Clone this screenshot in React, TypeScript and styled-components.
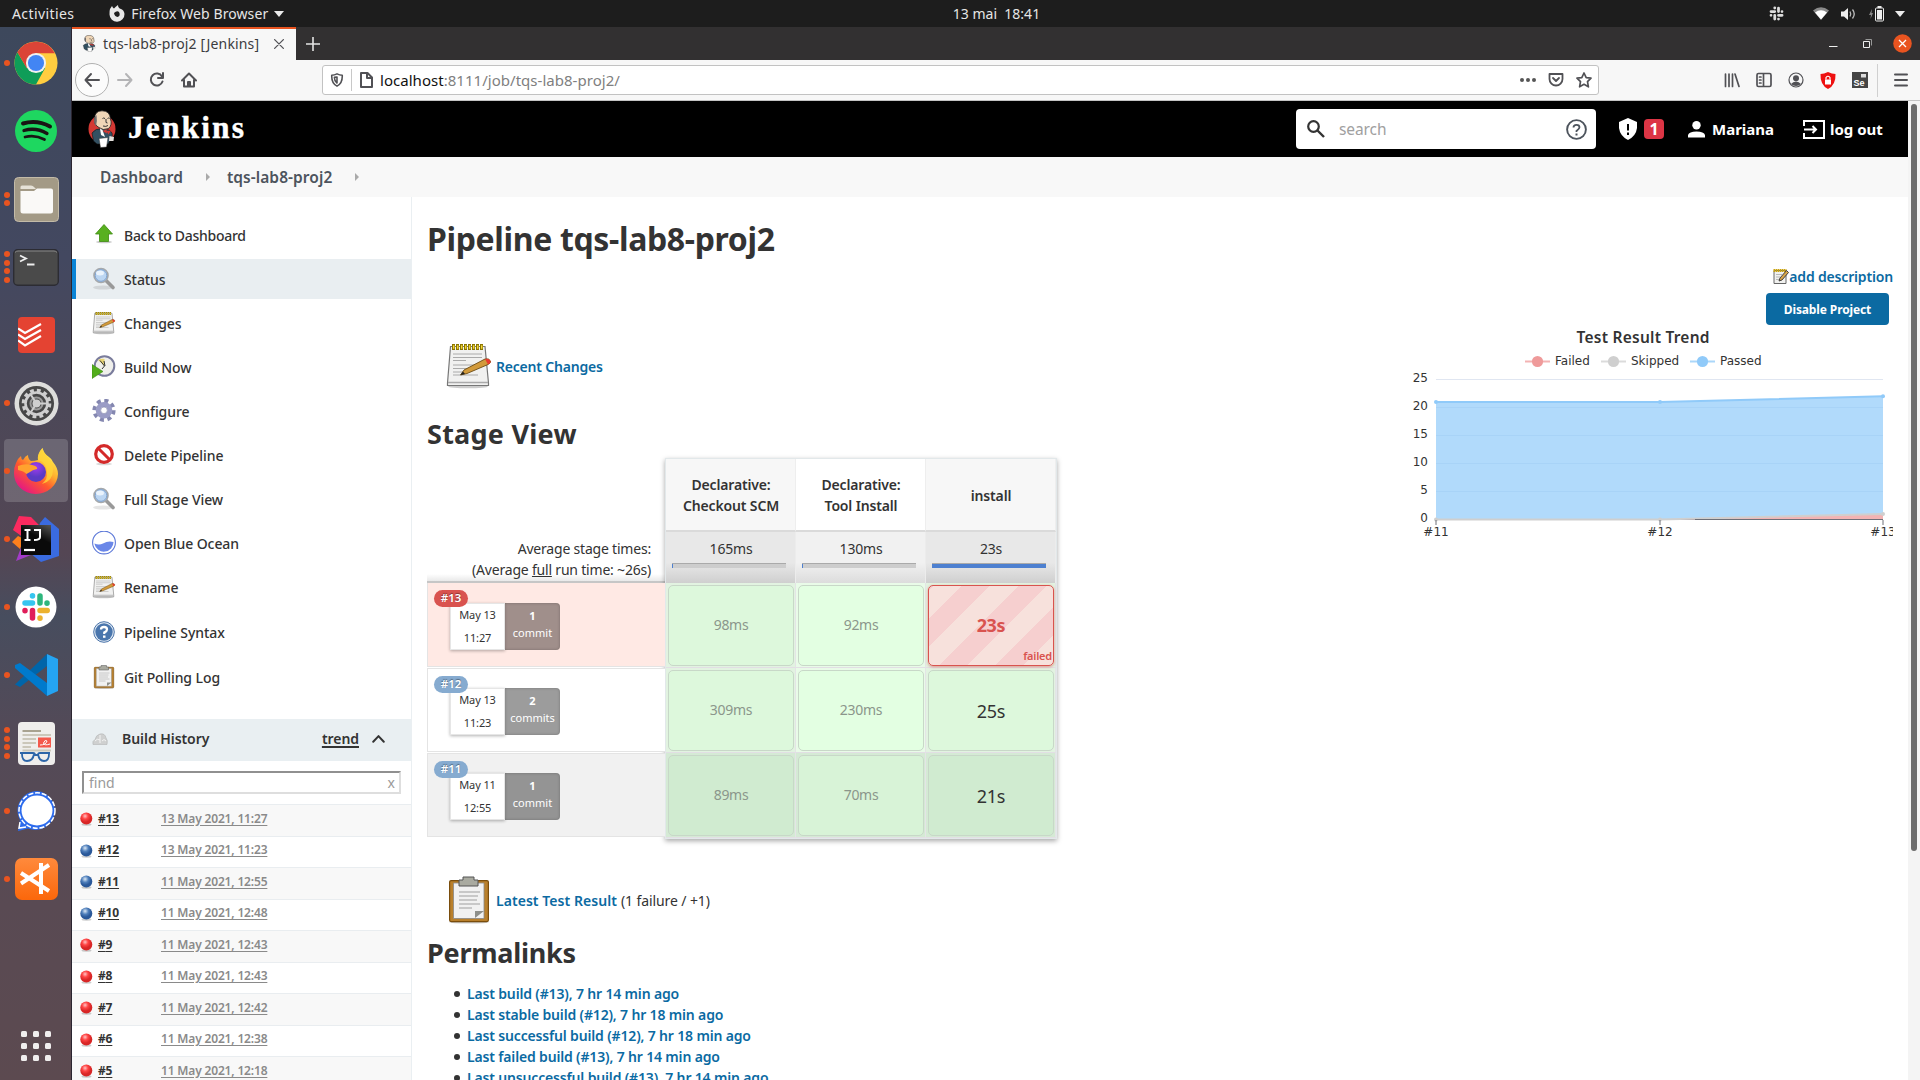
import React from 'react';
import styled, { createGlobalStyle, css } from 'styled-components';

const UI = `"Noto Sans", "Open Sans", sans-serif`;

const Global = createGlobalStyle`
  * { box-sizing: border-box; }
  html, body { margin: 0; padding: 0; overflow: hidden; }
  body { font-family: ${UI}; color: #333; background: #fff; }
  svg { display: block; flex: none; }
`;

/* ---------- shell ---------- */
const Screen = styled.div`
  width: 1920px; height: 1080px; overflow: hidden;
  display: flex; flex-direction: column;
`;
const TopBar = styled.div`
  height: 27px; flex: none; background: #1d1d1d; color: #e6e6e6;
  display: grid; grid-template-columns: 1fr auto 1fr; align-items: center;
  font-size: 14px; letter-spacing: 0.08px; white-space: pre;
`;
const TopLeft = styled.div`display: flex; align-items: center; padding-left: 12px;`;
const Activities = styled.span`letter-spacing: 0.4px;`;
const AppMenu = styled.div`display: flex; align-items: center; gap: 6px; margin-left: 35px;`;
const Clock = styled.div`position: relative; left: 36.5px; letter-spacing: 0;`;
const TopRight = styled.div`
  display: flex; align-items: center; justify-content: flex-end; padding-right: 15px;
`;
const WifiIcon = styled.svg`margin-left: 29px;`;
const TrayIcon = styled.svg`margin-left: 12px;`;
const Body = styled.div`flex: 1; display: flex; min-height: 0;`;
const Dock = styled.div`
  width: 72px; flex: none; display: flex; flex-direction: column; padding-top: 2px;
  background: linear-gradient(#3d485c 0%, #434860 22%, #4c4858 36%, #544654 50%, #474d5e 56%, #524a58 66%, #584a54 78%, #5c4a50 100%);
  border-right: 1px solid #2b2530;
`;
const DockItem = styled.div<{ $active?: boolean }>`
  height: 68px; flex: none; display: flex; align-items: center; position: relative;
  justify-content: center; padding-left: 1px;
  &::before {
    content: ''; display: ${p => (p.$active ? 'block' : 'none')};
    position: absolute; left: 4px; top: 2px; width: 64px; height: 63px;
    border-radius: 4px; background: rgba(255,255,255,.17);
  }
  svg { position: relative; }
`;
const Dots = styled.div`
  position: absolute; left: 4px; top: 0; height: 68px; width: 6px;
  display: flex; flex-direction: column; justify-content: center; gap: 2.6px;
  i { width: 6px; height: 6px; border-radius: 3px; background: #e95420; }
`;
const AppGrid = styled.div`
  margin: auto 0 19px 21px; display: grid; grid-template-columns: repeat(3, 6px); gap: 6px;
  i { width: 6px; height: 6px; border-radius: 1.5px; background: #f0eeee; }
`;

/* ---------- browser ---------- */
const Browser = styled.div`flex: 1; display: flex; flex-direction: column; min-width: 0;`;
const TabStrip = styled.div`
  height: 33px; flex: none; background: #323031; display: flex; align-items: center; gap: 10px;
`;
const Tab = styled.div`
  width: 224px; height: 33px; background: #f7f7f7; border-top: 2px solid #e95420;
  display: flex; align-items: center; padding: 0 12px 2px 9px;
  font-size: 14px; letter-spacing: 0.15px; color: #3c3c40; white-space: nowrap;
`;
const TabTitle = styled.span`flex: 1; margin-left: 6px;`;
const WinButtons = styled.div`
  margin-left: auto; display: flex; align-items: center; gap: 21px; padding-right: 8px;
  svg:first-child { margin-right: 4px; }
`;
const NavBar = styled.div`
  height: 41px; flex: none; background: #f7f7f7; border-bottom: 1px solid #c4c4c4;
  display: flex; align-items: center; padding-left: 3px;
`;
const BackButton = styled.div`
  width: 34px; height: 34px; border-radius: 17px; border: 1px solid #b1b1b1; background: #fcfcfc;
  display: flex; align-items: center; justify-content: center; margin-right: 8px;
`;
const NavIcons = styled.div`display: flex; gap: 16px; width: 205px;`;
const UrlBar = styled.div`
  width: 1277px; height: 30px; border: 1px solid #c2c2c2; border-radius: 3px; background: #fff;
  display: flex; align-items: center; padding: 0 6px 0 7px;
  font-size: 15px; letter-spacing: 0.03px; color: #7f7f7f;
  b { font-weight: 400; color: #111; }
`;
const UrlSep = styled.div`width: 1px; height: 22px; background: #c8c8c8; margin: 0 6px 0 7px;`;
const UrlText = styled.span`flex: 1; margin-left: 6px;`;
const UrlActions = styled.div`display: flex; gap: 12px; align-items: center;`;
const ToolIcons = styled.div`
  margin-left: auto; display: flex; align-items: center; gap: 16px; padding-right: 11px;
`;
const ToolSep = styled.div`width: 1px; height: 33px; background: #d0d0d0; margin: 0 -1px 0 -6.5px;`;

const Viewport = styled.div`flex: 1; display: flex; min-height: 0;`;
const Page = styled.div`flex: 1; min-width: 0; display: flex; flex-direction: column; background: #fff;`;
const Scroll = styled.div`
  width: 12px; background: #f4f4f4; padding: 3px 3px 0 3px;
  &::before { content: ''; display: block; height: 747px; border-radius: 3px; background: #6c6c6c; }
`;

/* ---------- Jenkins header ---------- */
const Header = styled.div`
  height: 56px; flex: none; background: #000; color: #fff; display: flex; align-items: center;
  padding: 0 24px 0 15px; font-size: 15px; font-weight: 700;
`;
const Brand = styled.span`
  font-family: "Liberation Serif", serif; font-weight: 700; font-size: 31.5px;
  -webkit-text-stroke: 0.4px #fff;
  margin-left: 11px; letter-spacing: 2.1px; position: relative; top: -1px;
`;
const SearchBox = styled.div`
  margin-left: auto; width: 300px; height: 40px; border-radius: 4px; background: #fff; color: #a0a0a0;
  display: flex; align-items: center; padding: 0 9px 0 11px; font-weight: 400; font-size: 15.5px;
`;
const SearchHint = styled.span`flex: 1; margin-left: 14px; letter-spacing: -0.1px;`;
const Alert = styled.div`
  display: flex; align-items: center; gap: 6px; margin-left: 22px;
  span { width: 20px; height: 20px; border-radius: 4px; background: #dc3545; text-align: center; line-height: 20px; font-size: 16px; }
`;
const HeadLink = styled.div<{ $w: number; $gap: number }>`
  display: flex; align-items: center; justify-content: flex-start; width: ${p => p.$w}px; gap: ${p => p.$gap}px;
  letter-spacing: 0; white-space: nowrap;
`;
const Crumbs = styled.div`
  height: 40px; flex: none; background: #f8f8f8; display: flex; align-items: center;
  padding: 0 0 1px 28px; font-size: 15.5px; letter-spacing: 0.06px; font-weight: 600; color: #4d545d;
`;
const CrumbArrow = styled.i`
  border: 4px solid transparent; border-left: 4px solid #aaa; border-right: 0; margin: 1px 17px 0 23px;
`;
const Columns = styled.div`flex: 1; display: flex; min-height: 0;`;

/* ---------- sidebar ---------- */
const Side = styled.div`
  width: 340px; flex: none; border-right: 1px solid #eaeff2; display: flex; flex-direction: column;
  overflow: hidden; padding-top: 18px;
`;
const Task = styled.div<{ $on?: boolean; $extra?: number; $tight?: boolean }>`
  height: 40px; flex: none; margin-bottom: ${p => 4 + (p.$extra || 0)}px;
  display: flex; align-items: center; gap: 8px; padding-left: 16px;
  border-left: 4px solid ${p => (p.$on ? '#0b84d6' : 'transparent')};
  background: ${p => (p.$on ? '#e9eef1' : 'transparent')};
  font-size: 14px; font-weight: 500; letter-spacing: ${p => (p.$tight ? '-0.28px' : '-0.08px')}; color: #333;
`;
const HistHead = styled.div`
  height: 42px; flex: none; margin-top: 18px; background: #e9eff2; display: flex; align-items: center;
  padding: 0 26px 3px 20px; font-size: 14px; font-weight: 600; color: #333; letter-spacing: -0.05px;
  u { margin-left: auto; margin-right: 13px; text-underline-offset: 2px; text-decoration-thickness: 2px; }
  span { margin-left: 14px; }
`;
const Find = styled.div`
  height: 23px; flex: none; margin: 10px 10px 10px 10px; border: 2px solid; border-color: #909090 #dedede #dedede #909090;
  display: flex; align-items: center; justify-content: space-between; padding: 0 4px 0 5px;
  font-size: 14px; color: #9a9a9a;
`;
const Build = styled.div<{ $odd: boolean }>`
  height: 31.5px; flex: none; border-top: 1px solid #e9edf0; background: ${p => (p.$odd ? '#f8f8f8' : '#fff')};
  display: grid; grid-template-columns: 12px 57px 1fr; column-gap: 6px; padding-left: 8px; align-items: start;
  font-size: 12px; font-weight: 700; letter-spacing: -0.15px; color: #333;
  svg { margin-top: 7px; }
  u { line-height: 16px; margin-top: 5.5px; text-underline-offset: 2px; justify-self: start; }
  u + u { color: #8a8a8a; font-weight: 600; letter-spacing: -0.17px; }
`;

/* ---------- main ---------- */
const Main = styled.div`flex: 1; display: flex; min-width: 0; overflow: hidden; padding: 0 15px;`;
const MainLeft = styled.div`width: 640px; flex: none;`;
const H1 = styled.h1`
  margin: 21px 0 0; font-size: 32px; line-height: 42px; font-weight: 700; letter-spacing: -0.35px; white-space: nowrap;
`;
const H2 = styled.h2<{ $mt: number; $mb: number; $ls: number }>`
  margin: ${p => p.$mt}px 0 ${p => p.$mb}px; font-size: 27px; line-height: 40px; font-weight: 700;
  letter-spacing: ${p => p.$ls}px; height: 40px;
`;
const IconRow = styled.div<{ $mt: number; $ls: number }>`
  margin-top: ${p => p.$mt}px; height: 50px; padding-left: 18px; display: flex; align-items: center; gap: 3px;
  font-size: 14px; letter-spacing: ${p => p.$ls}px;
  b { color: #0b6aa2; font-weight: 600; } span { margin-left: 1px; letter-spacing: -0.1px; }
`;
const Links = styled.ul`
  list-style: none; margin: 10px 0 0; padding-left: 27px; font-size: 14px; line-height: 21px; white-space: nowrap;
  li { display: flex; align-items: center; gap: 7px; }
  li::before { content: ''; width: 6px; height: 6px; border-radius: 3px; background: #333; }
  a { color: #0b6aa2; font-weight: 600; letter-spacing: -0.16px; }
`;

const Stage = styled.div`display: flex; height: 381px; font-size: 14px;`;
const RunCol = styled.div`width: 238px; flex: none; display: flex; flex-direction: column; height: 380px;`;
const AvgText = styled.div`
  height: 125px; flex: none; padding: 80px 14px 0 0; text-align: right; line-height: 21px; letter-spacing: -0.2px;
  border-bottom: 2px solid #c6c6c6;
  background: linear-gradient(transparent 116px, #e9e9e9 123px);
  white-space: nowrap;
`;
const Run = styled.div<{ $bg: string }>`
  height: 84px; margin-bottom: 1px; flex: none; background: ${p => p.$bg}; border: 1px solid #e4e4e4; border-right: 0;
  border-top-width: 0; & + & { border-top-width: 1px; padding-top: 19px; }
  padding: 20px 0 0 22px; display: flex; position: relative;
`;
const RunBadge = styled.div<{ $bad?: boolean }>`
  position: absolute; left: 6px; top: 7px; width: 34px; height: 17px; border-radius: 8.5px;
  background: ${p => (p.$bad ? '#d9534f' : '#86abd0')}; color: #fff; font-size: 11.5px; font-weight: 600;
  text-align: center; line-height: 16px; text-shadow: 0 -1px 1px rgba(0,0,0,.4); z-index: 1;
`;
const RunDate = styled.div`
  width: 55px; height: 47px; background: #fff; border: 1px solid #e6e6e6; box-shadow: 0 1px 3px rgba(0,0,0,.3);
  font-size: 11px; line-height: 23px; text-align: center; letter-spacing: -0.1px;
  div:first-child { line-height: 22px; }
`;
const Commits = styled.div<{ $bg: string }>`
  width: 55px; height: 47px; border-radius: 0 4px 4px 0; background: ${p => p.$bg}; color: #fff;
  box-shadow: inset 0 0 3px rgba(0,0,0,.25); font-size: 11px; line-height: 17px; text-align: center; padding-top: 4px;
`;
const Grid = styled.div`
  width: 392px; border: 1px solid #e2e8ea; box-shadow: 0 2px 5px rgba(0,0,0,.35);
  display: grid; grid-template-columns: repeat(3, 130px); grid-template-rows: 73px 51px 85px 85px 85px;
`;
const StageHead = styled.div<{ $alt?: boolean; $drop?: boolean }>`
  background: ${p => (p.$alt ? '#fff' : '#f7f7f7')}; border-bottom: 2px solid #dadada; border-right: 1px solid #eee;
  display: flex; align-items: center; justify-content: center; text-align: center; padding: ${p => (p.$drop ? 2 : 0)}px 0 0 1px;
  font-weight: 600; line-height: 21px; white-space: pre; letter-spacing: -0.15px;
`;
const Avg = styled.div<{ $alt?: boolean }>`
  background: linear-gradient(${p => (p.$alt ? '#f1f1f1' : '#e8e8e8')} 60%, ${p => (p.$alt ? '#dcdcdc' : '#cfcfcf')});
  border-right: 1px solid #ececec; text-align: center; padding: 6px 0 0 1px; line-height: 21px; letter-spacing: -0.2px;
`;
const Bar = styled.div<{ $px: number }>`
  width: 114px; height: 5px; margin: 4px 0 0 5px; border-top: 1px solid #aaa;
  background: linear-gradient(90deg, #4d80d0 ${p => p.$px}px, #cdcdcd ${p => p.$px}px);
`;
const CellWrap = styled.div<{ $bg: string }>`
  padding: 2px 1px 2px 2px; background: ${p => p.$bg}; border-bottom: 1px solid #e2dfe4; border-right: 1px solid #e4e4e6;
`;
const Cell = styled.div<{ $bg: string; $big?: boolean; $fail?: boolean }>`
  height: 81px; border-radius: 5px; border: 1px solid #c8d8c8; background: ${p => p.$bg};
  display: flex; align-items: center; justify-content: center; position: relative; padding-bottom: 2px;
  color: #8b968b; letter-spacing: -0.3px;
  ${p => p.$big && css`color: #333; font-size: 18px; padding-bottom: 0;`}
  ${p => p.$fail && css`
    color: #d9534f; font-weight: 700; font-size: 18px; border: 1.5px solid #d9534f; box-shadow: 0 1px 3px rgba(217,83,79,.6);
    background: repeating-linear-gradient(135deg, #f6cfcf 0 3px, #f7e1dc 3px 23px, #f6cfcf 23px 40px);
    padding-bottom: 2px;
  `}
  small { position: absolute; right: 1px; bottom: 2px; font-size: 11px; font-weight: 600; letter-spacing: -0.2px; }
`;

const Right = styled.div`flex: 1; display: flex; flex-direction: column; align-items: flex-end; padding-top: 67px;`;
const AddDesc = styled.div`
  display: flex; align-items: center; height: 24px; font-size: 14px; font-weight: 600; letter-spacing: -0.17px; color: #0b6aa2;
`;
const Disable = styled.div`
  width: 123px; height: 32px; margin: 5px 4px 0 0; border-radius: 4px; background: #0b6aa2; color: #fff;
  font-size: 12px; font-weight: 700; letter-spacing: -0.12px; line-height: 33px; text-align: center;
`;

/* ---------- icons ---------- */
const Chrome = () => (
  <svg width="44" height="44" viewBox="0 0 48 48">
    <circle cx="24" cy="24" r="23.5" fill="#ffcd40" />
    <path d="M3.7 12.3A23.5 23.5 0 0 0 24 47.5L34 29.5 24 24 14 29.5Z" fill="#0f9d58" />
    <path d="M3.7 12.3A23.5 23.5 0 0 1 44.6 13.3H24L14 29.6Z" fill="#db4437" />
    <circle cx="24" cy="24" r="11" fill="#f1f1f1" /><circle cx="24" cy="24" r="8.8" fill="#4285f4" />
  </svg>
);
const Spotify = () => (
  <svg width="42" height="42" viewBox="0 0 42 42">
    <circle cx="21" cy="21" r="21" fill="#1ed760" />
    <g fill="none" stroke="#191414" strokeLinecap="round">
      <path d="M8 13.5Q22 9.5 35 16.5" strokeWidth="4" /><path d="M9 20.5Q21 17 32 23.5" strokeWidth="3.3" />
      <path d="M10 27Q20 24.300 29.500 29.500" strokeWidth="2.700" />
    </g>
  </svg>
);
const Files = () => (
  <svg width="45" height="45" viewBox="0 0 45 45">
    <rect x=".5" y=".5" width="44" height="44" rx="4" fill="#a39a86" stroke="#c3bba8" />
    <path d="M6.500 10Q6.500 8.500 8 8.500H17Q19 8.500 20 10L22 12H6.500Z" fill="#e6e2d8" />
    <path d="M6.500 14H20L23 11.500H37Q39 11.500 39 13.500V34Q39 36.500 36.500 36.500H9Q6.500 36.500 6.500 34Z" fill="#faf9f7" />
  </svg>
);
const Terminal = () => (
  <svg width="46" height="37" viewBox="0 0 46 37">
    <rect x=".7" y=".7" width="44.600" height="35.600" rx="4" fill="#4a4a4a" stroke="#2c2c33" strokeWidth="1.400" />
    <path d="M2 3.500Q3 2 5 2H41Q43 2 44 3.500" stroke="#888" fill="none" />
    <path d="M7 6.500L13 9.500 7 12.500M14 15.500H21.500" stroke="#eee" strokeWidth="1.800" fill="none" />
  </svg>
);
const Todoist = () => (
  <svg width="37" height="36" viewBox="0 0 37 36">
    <rect width="37" height="36" rx="4" fill="#e44332" />
    <g stroke="#fff" strokeWidth="2.200" fill="none">
      <path d="M0 11.500L7 16 23 7" /><path d="M0 17.500L7 22 23 13" /><path d="M0 23.500L7 28.500 23 19" />
    </g>
  </svg>
);
const Settings = () => (
  <svg width="45" height="45" viewBox="0 0 45 45">
    <circle cx="22.500" cy="22.500" r="22" fill="#dededc" /><circle cx="22.500" cy="22.500" r="17.500" fill="#474747" />
    <circle cx="22.500" cy="22.500" r="12.800" fill="none" stroke="#cfcfcf" strokeWidth="4" strokeDasharray="3.700 3" />
    <circle cx="22.500" cy="22.500" r="11" fill="none" stroke="#cfcfcf" strokeWidth="2.600" />
    <circle cx="22.500" cy="22.500" r="6" fill="none" stroke="#9b9b9b" strokeWidth="2" />
    <circle cx="22.500" cy="22.500" r="4" fill="#cfcfcf" />
    <path d="M22.500 22.500L34 22.500M22.500 22.500L16 12.500M22.500 22.500L16 32.500" stroke="#cfcfcf" strokeWidth="2" />
  </svg>
);
const Firefox = () => (
  <svg width="46" height="46" viewBox="0 0 46 46">
    <defs>
      <linearGradient id="ff1" x1="0.850" y1="0.100" x2="0.200" y2="0.950">
        <stop offset="0" stopColor="#fff44f" /><stop offset=".35" stopColor="#ffb02e" /><stop offset=".6" stopColor="#ff5a2c" /><stop offset="1" stopColor="#e31587" />
      </linearGradient>
      <radialGradient id="ff2" cy=".25"><stop offset="0" stopColor="#a33bf0" /><stop offset="1" stopColor="#5b3ac5" /></radialGradient>
    </defs>
    <path d="M3 15Q5 10 8 8Q8 11 10 12Q12 8 15 7Q15 11 18 13Q22 13 25 12Q24 6 29.500 0Q31 6 36 9Q39 11 40 14Q45 20 45 26A22 20.500 0 0 1 1 25Q1 19 3 15Z" fill="url(#ff1)" />
    <circle cx="23" cy="24" r="10" fill="url(#ff2)" />
    <path d="M5 18Q12 15 21 17.500Q25 19 24 21Q19 22 17 24L13.500 26Q11 23 5 22Z" fill="#ffa22e" />
    <path d="M25 12Q33 14 34 24Q35 31 29 36Q40 33 40 22Q40 14 33 7Q30 4 29.500 0Q24 6 25 12Z" fill="#ffd43a" opacity=".8" />
  </svg>
);
const Idea = () => (
  <svg width="48" height="48" viewBox="0 0 48 48">
    <defs><linearGradient id="ij" x1="1" y1="0" x2=".5" y2="1"><stop offset="0" stopColor="#555" /><stop offset=".5" stopColor="#0a0a0a" /></linearGradient></defs>
    <path d="M1 15L7 1 19 2 29 12 20 30 8 20Z" fill="#fb2a5f" /><path d="M0 27L6 21 12 24 8 34Z" fill="#fc801d" />
    <path d="M28 8L33 2 47 14V41L29 47 18 38Z" fill="#3a6be0" /><path d="M4 46L10 30 24 38Z" fill="#a33bc8" />
    <rect x="9" y="10" width="30" height="30" fill="url(#ij)" />
    <path d="M12.500 15H18.500M15.500 15V25M12.500 25H18.500M22 15H28V22Q28 25 22 25" stroke="#fff" strokeWidth="2" fill="none" />
    <path d="M12 35H23" stroke="#fff" strokeWidth="2.200" />
  </svg>
);
const slackParts = (c: string[]) => (
  <g strokeWidth="5.500" strokeLinecap="round">
    <path d="M10 17H17.500M17.500 9.700V10" stroke={c[0]} /><path d="M25 10V17M32 17V17.200" stroke={c[1]} />
    <path d="M25 24.500H32.200M25 32V32.200" stroke={c[2]} /><path d="M17.500 24.500V32M10 24.500V24.700" stroke={c[3]} />
  </g>
);
const Slack = () => (
  <svg width="42" height="42" viewBox="0 0 42 42"><circle cx="21" cy="21" r="20.500" fill="#fff" />{slackParts(['#36c5f0', '#2eb67d', '#ecb22e', '#e01e5a'])}</svg>
);
const VSCode = () => (
  <svg width="43" height="42" viewBox="0 0 43 42">
    <path d="M0 30.500L32 0V12L5 33Z" fill="#0065a9" /><path d="M0 11L5 9 32 29V42L0 14Z" fill="#007acc" />
    <path d="M32 0L43 5V37L32 42Z" fill="#25a4f2" />
  </svg>
);
const Reader = () => (
  <svg width="37" height="43" viewBox="0 0 37 43">
    <rect width="37" height="43" rx="4" fill="#efeeec" />
    <path d="M4.500 9H23" stroke="#a8a290" strokeWidth="2" />
    <path d="M4.500 13H33M4.500 17H18M4.500 21H18M4.500 25H13M4.500 28.500H33" stroke="#cbc7ba" strokeWidth="1.800" />
    <rect x="20" y="15.500" width="13" height="10" fill="#f4594c" />
    <path d="M22 23Q28 23 29 19Q27 17 25.500 21Q26 24 32 22" stroke="#fff" fill="none" />
    <path d="M2 31H15Q17 31 17 33H20Q20 31 22 31H32M4 32Q4 39 9 39Q15 39 16 32M20 32Q21 39 26 39Q31 39 31 32" stroke="#2c65a8" strokeWidth="1.800" fill="none" />
  </svg>
);
const Signal = () => (
  <svg width="43" height="42" viewBox="0 0 43 42">
    <path d="M22 1A19.500 19.500 0 1 1 13 38.500L3 41 5 30A19.500 19.500 0 0 1 22 1Z" fill="#2c6bed" />
    <ellipse cx="22" cy="20.500" rx="18" ry="17.700" fill="none" stroke="#fff" strokeWidth="1.500" strokeDasharray="5 1.800" />
    <ellipse cx="22" cy="20.500" rx="15.500" ry="15" fill="#fff" />
    <path d="M5 32L4 38 11 37" stroke="#fff" fill="none" strokeWidth="1.500" />
  </svg>
);
const Orange = () => (
  <svg width="43" height="42" viewBox="0 0 43 42">
    <defs><linearGradient id="og" x1="0" y1="0" x2="0" y2="1"><stop offset="0" stopColor="#ff8a3c" /><stop offset="1" stopColor="#fb670b" /></linearGradient></defs>
    <rect width="43" height="42" rx="7" fill="url(#og)" />
    <path d="M6 25.500L34 7M6 15L34 33M26 5V36" stroke="#fff" strokeWidth="4" />
  </svg>
);
const Butler = ({ w, h, bare }: { w: number; h: number; bare?: boolean }) => (
  <svg width={w} height={h} viewBox="0 0 28 38" preserveAspectRatio={bare ? 'none' : undefined}>
    {!bare && <ellipse cx="14" cy="19" rx="13.500" ry="14" fill="#d33833" />}
    <path d="M4 23Q8 18 13 19L21 20Q26 23 23.500 28L20 34H9L5.500 31Z" fill="#335061" stroke="#111" strokeWidth=".6" />
    <path d="M6.500 9Q6.500 1 14 .8Q22 .8 22.500 9Q24.500 15 20.500 18.500Q15 21 11 17.500Q6 15 6.500 9Z" fill="#f0d6b7" stroke="#222" strokeWidth=".8" />
    <path d="M6.500 7.500Q5 13 8 16Q9.500 11 8.500 5Z" fill="#6d6b6d" />
    <path d="M14.500 8.500Q15.500 7.500 17 8.500M19.500 8.500Q20.500 7.500 21.500 8.500M18 9V12.500L19.500 13M15 16Q18 17 20 15.500" stroke="#333" strokeWidth="1" fill="none" />
    <path d="M12 18.500L14.500 20 17 27 13 25Z" fill="#fff" />
    <path d="M14.500 21L18.500 19.500 19 23.500ZM23 20.500L18.500 21 20.500 24.500Z" fill="#d33833" />
    <path d="M11 28.500L20 27.500 18.500 37 12.500 37.500Z" fill="#fff" stroke="#333" strokeWidth=".5" /><path d="M21.500 26L26 27 25.500 31 21 31Z" fill="#e4e0dc" />
  </svg>
);
const Notepad = ({ s }: { s: number }) => (
  <svg width={s} height={s} viewBox="0 0 48 48">
    <ellipse cx="23" cy="44.500" rx="20" ry="1.800" fill="#000" opacity=".2" />
    <path d="M5.500 4.500H40L43.500 41V43.500H2.500V41Z" fill="#f1f1f0" stroke="#777" strokeWidth="1.200" />
    <path d="M3 40.500H43" stroke="#aaa" strokeWidth="1.600" />
    <path d="M8 12H37M8 15.500H37M8 18.500H21M8 23H30M8 26.500H28M8 30H20M8 33H33" stroke="#aaa" strokeWidth="1" />
    <path d="M7 5H39" stroke="#8b7500" strokeWidth="6" strokeDasharray="3 1" /><path d="M8 5H38" stroke="#f5d93a" strokeWidth="3.500" strokeDasharray="1.400 2.600" />
    <path d="M15.500 33L19 28 40 17Q44 16 45.500 19Q46 21 43 22.500L22 31.500Z" fill="#d29a3a" stroke="#6b4a12" strokeWidth=".9" />
    <path d="M40 17Q44 16 45.500 19Q46 21 43 22.500Z" fill="#e8392f" /><path d="M15.500 33L18 29.500 20 32Z" fill="#222" />
  </svg>
);
const SmallNote = () => (
  <svg width="16" height="16" viewBox="0 0 16 16">
    <path d="M1 2.500H13V15.500H1Z" fill="#f1f1ef" stroke="#666" />
    <path d="M3 6.500H9M3 9H7M3 11.500H6" stroke="#aaa" strokeWidth=".8" />
    <path d="M.5 2.500H13.500" stroke="#c9a20f" strokeWidth="3" strokeDasharray="1.500 .5" />
    <path d="M6 13L7 10 13.500 2.500 15.500 4.500 9 12Z" fill="#d9a64a" stroke="#333" strokeWidth=".9" />
  </svg>
);
const Clip = ({ s }: { s: number }) => (
  <svg width={s} height={s} viewBox="0 0 48 48">
    <ellipse cx="24" cy="46" rx="20" ry="1.600" fill="#000" opacity=".2" />
    <rect x="4.600" y="4.600" width="38.800" height="41" rx="1.500" fill="#b9802c" stroke="#7a4d0c" strokeWidth="1.200" />
    <path d="M8.500 7H39V42.500H8.500Z" fill="#f1f1f1" stroke="#888" strokeWidth=".8" />
    <path d="M14 16H35M14 20H33M14 24H32M14 28H35M14 32H27" stroke="#bbb" strokeWidth="1.500" />
    <path d="M30 42V35H39Z" fill="#8d8f8a" />
    <path d="M18 4V1H29V4H33V10H14V4Z" fill="#a9aaa0" stroke="#555" strokeWidth="1" />
  </svg>
);
const Lens = () => (
  <svg width="24" height="24" viewBox="0 0 24 24">
    <ellipse cx="11" cy="20.500" rx="10" ry="2" fill="#000" opacity=".1" />
    <path d="M14 13.500L21 20.500" stroke="#999" strokeWidth="3.600" strokeLinecap="round" />
    <circle cx="9" cy="8.500" r="7" fill="#bcd6f2" stroke="#a5a8ab" strokeWidth="1.600" /><circle cx="9" cy="8.500" r="5.800" fill="none" stroke="#6f96c8" strokeWidth=".8" />
    <ellipse cx="8" cy="6" rx="4" ry="2.500" fill="#eaf3fc" />
  </svg>
);
const UpArrow = () => (
  <svg width="24" height="24" viewBox="0 0 24 24"><ellipse cx="12" cy="19" rx="8" ry="1.300" fill="#000" opacity=".2" />
    <path d="M12 1.500L20.500 11H16.500V18.500H7.500V11H3.500Z" fill="#58b01f" stroke="#3d8a10" strokeWidth=".8" /></svg>
);
const ClockIcon = () => (
  <svg width="24" height="24" viewBox="0 0 24 24">
    <circle cx="12.500" cy="11" r="9.800" fill="#efefeb" stroke="#7a7c9c" strokeWidth="2" />
    <path d="M12.500 11L6 5Q9 3 12.500 4Z" fill="#e8d473" /><path d="M8 5.500L12.500 11L10 14M13 11L12 6" stroke="#333" fill="none" />
    <path d="M0 9.500L11 16.500 0 23.500Z" fill="#53ad1c" stroke="#3c8a12" strokeWidth=".6" />
  </svg>
);
const Gear = () => (
  <svg width="24" height="24" viewBox="0 0 24 24">
    <circle cx="12" cy="11.300" r="9.600" fill="none" stroke="#8487b0" strokeWidth="4" strokeDasharray="4 3.540" />
    <circle cx="12" cy="11.300" r="5.800" fill="none" stroke="#9a9cc6" strokeWidth="5" /><circle cx="12" cy="11.300" r="3.300" fill="#fff" stroke="#7b7ea5" strokeWidth=".6" />
  </svg>
);
const Ban = () => (
  <svg width="24" height="24" viewBox="0 0 24 24"><ellipse cx="12" cy="21" rx="8" ry="1.300" fill="#000" opacity=".15" />
    <circle cx="12" cy="11" r="8.300" fill="#fff" stroke="#d42a2a" strokeWidth="3.200" /><path d="M6.500 5.500L17.500 16.500" stroke="#d42a2a" strokeWidth="3" /></svg>
);
const Ocean = () => (
  <svg width="24" height="24" viewBox="0 0 24 24"><circle cx="12" cy="11.500" r="11.400" fill="#fff" stroke="#5c78d8" strokeWidth="1.100" />
    <path d="M2.500 12.500Q7 14.500 11 12.500Q16 9.500 21.500 11A9.600 9.600 0 0 1 2.500 13Z" fill="#6a87e8" /></svg>
);
const Help = () => (
  <svg width="24" height="24" viewBox="0 0 24 24"><circle cx="12" cy="12" r="10.300" fill="#dfe8f2" stroke="#4c75aa" strokeWidth="1" /><circle cx="12" cy="12" r="8.700" fill="#4a76ad" />
    <path d="M9 9.500Q9 7 12 7Q15 7 15 9.500Q15 11 12.300 12.500V14" stroke="#fff" strokeWidth="2.300" fill="none" /><rect x="11" y="15.500" width="2.500" height="2.300" fill="#fff" /></svg>
);
const Ball = ({ red }: { red: boolean }) => (
  <svg width="13" height="14" viewBox="0 0 13 14">
    <defs>
      <radialGradient id="br" cx=".4" cy=".3"><stop offset="0" stopColor="#ffc4c4" /><stop offset=".5" stopColor="#f44" /><stop offset="1" stopColor="#d82626" /></radialGradient>
      <radialGradient id="bb" cx=".4" cy=".3"><stop offset="0" stopColor="#dce9f5" /><stop offset=".55" stopColor="#4f7fbb" /><stop offset="1" stopColor="#2a5899" /></radialGradient>
    </defs>
    <ellipse cx="6.500" cy="12.500" rx="5" ry="1.200" fill="#000" opacity=".2" /><circle cx="6.300" cy="6.500" r="6" fill={red ? 'url(#br)' : 'url(#bb)'} />
  </svg>
);
const Cloud = () => (
  <svg width="16" height="14" viewBox="0 0 16 14"><path d="M1 12.500Q0 9 3 7.500Q4 3 8 2Q13 1 14 6Q16 8 15 12.500Z" fill="#cfd0d0" stroke="#b3b5b5" strokeWidth=".6" /><path d="M3 9Q5 6 8 8M8 3V11M10 9Q12 6 14 9" stroke="#f3f3f3" fill="none" /></svg>
);
const Line = ({ d, w = 16, c = '#515155', sw = 2, fill = 'none' }: { d: string; w?: number; c?: string; sw?: number; fill?: string }) => (
  <svg width={w} height={w} viewBox="0 0 16 16"><path d={d} stroke={c} strokeWidth={sw} fill={fill} strokeLinejoin="round" strokeLinecap="round" /></svg>
);
const TriSvg = styled.svg<{ $ml: number }>`margin-left: ${p => p.$ml}px;`;
const Tri = ({ ml = 0 }: { ml?: number }) => (
  <TriSvg $ml={ml} width="10" height="6" viewBox="0 0 10 6"><path d="M0 0H10L5 6Z" fill="#ececec" /></TriSvg>
);

/* ---------- chart ---------- */
const X = [41, 265, 488];
const yOf = (v: number) => 178.500 - v * 5.600;
const Chart = () => (
  <svg width="498" height="230" viewBox="0 -14 498 230" fontFamily='"DejaVu Sans", sans-serif' fontSize="12" fill="#333">
    <text x="248" y="2" textAnchor="middle" fontFamily='"Noto Sans", sans-serif' fontSize="15.500" fontWeight="600" textLength="133">Test Result Trend</text>
    {[['Failed', 130, '#ef9a9a'], ['Skipped', 206, '#cfcfcf'], ['Passed', 295, '#90caf9']].map(([n, x, c]) => (
      <g key={n as string}><path d={`M${x} 20.500h25`} stroke={c as string} strokeWidth="2" opacity=".75" /><circle cx={(x as number) + 12.500} cy="20.500" r="5.600" fill={c as string} /><text x={(x as number) + 30} y="24">{n}</text></g>
    ))}
    {[25, 20, 15, 10, 5, 0].map(v => (
      <g key={v}><path d={`M41 ${yOf(v)}H488`} stroke={v ? '#e0e6f1' : '#6e7079'} strokeWidth="1" /><text x="33" y={yOf(v) + 2.500} textAnchor="end">{v}</text></g>
    ))}
    <path d={`M41 ${yOf(21)}L265 ${yOf(21)} 488 ${yOf(22)}V${yOf(1)}L265 ${yOf(0)}H41Z`} fill="#90caf9" opacity=".7" />
    <path d={`M265 ${yOf(0)}L488 ${yOf(1)}V${yOf(0)}Z`} fill="#ef9a9a" opacity=".75" />
    <path d={`M41 ${yOf(21)}L265 ${yOf(21)} 488 ${yOf(22)}`} fill="none" stroke="#90caf9" strokeWidth="2" />
    <path d={`M41 ${yOf(0)}L265 ${yOf(0)} 488 ${yOf(1)}`} fill="none" stroke="#cfcfcf" strokeWidth="2" />
    <path d={`M300 ${yOf(0)}H488`} stroke="#6e7079" />
    {X.map((x, i) => (
      <g key={x}><circle cx={x} cy={yOf(i === 2 ? 22 : 21)} r="2" fill="#90caf9" /><circle cx={x} cy={yOf(i === 2 ? 1 : 0)} r="2" fill="#cfcfcf" />
        <path d={`M${x} 179v5`} stroke="#6e7079" /><text x={x} y="195" textAnchor="middle">#{11 + i}</text></g>
    ))}
  </svg>
);
const ChartBox = styled.div`width: 498px; margin-top: 1.5px; overflow: hidden;`;

/* ---------- data ---------- */
const dock: [React.FC, number, boolean?][] = [
  [Chrome, 1], [Spotify, 0], [Files, 2], [Terminal, 4], [Todoist, 0], [Settings, 1], [Firefox, 1, true],
  [Idea, 1], [Slack, 1], [VSCode, 1], [Reader, 4], [Signal, 1], [Orange, 1],
];
const tasks: [string, React.ReactNode, number?][] = [
  ['Back to Dashboard', <UpArrow />], ['Status', <Lens />], ['Changes', <Notepad s={24} />], ['Build Now', <ClockIcon />],
  ['Configure', <Gear />], ['Delete Pipeline', <Ban />], ['Full Stage View', <Lens />], ['Open Blue Ocean', <Ocean />],
  ['Rename', <Notepad s={24} />, 1], ['Pipeline Syntax', <Help />, 1], ['Git Polling Log', <Clip s={24} />],
];
const builds: [number, string, boolean][] = [
  [13, '13 May 2021, 11:27', true], [12, '13 May 2021, 11:23', false], [11, '11 May 2021, 12:55', false],
  [10, '11 May 2021, 12:48', false], [9, '11 May 2021, 12:43', true], [8, '11 May 2021, 12:43', true],
  [7, '11 May 2021, 12:42', true], [6, '11 May 2021, 12:38', true], [5, '11 May 2021, 12:18', true],
];
const runs = [
  { n: 13, d: 'May 13', t: '11:27', c: 1, bg: '#ffe9e4', cb: '#a08f8b', bad: true },
  { n: 12, d: 'May 13', t: '11:23', c: 2, bg: '#fff', cb: '#9c9c9c' },
  { n: 11, d: 'May 11', t: '12:55', c: 1, bg: '#f1f1f1', cb: '#949494' },
];
const cells = [
  ['98ms', '92ms', '23s'], ['309ms', '230ms', '25s'], ['89ms', '70ms', '21s'],
];
const cellBg = [
  ['#ddf8dc', '#e3ffe2', ''], ['#ddf8dc', '#e3ffe2', '#ddf8dc'], ['#d0ebd0', '#d8f3d7', '#d0ebd0'],
];
const links = [
  'Last build (#13), 7 hr 14 min ago', 'Last stable build (#12), 7 hr 18 min ago', 'Last successful build (#12), 7 hr 18 min ago',
  'Last failed build (#13), 7 hr 14 min ago', 'Last unsuccessful build (#13), 7 hr 14 min ago',
];

export default function App() {
  return (
    <Screen>
      <Global />
      <TopBar>
        <TopLeft>
          <Activities>Activities</Activities>
          <AppMenu>
            <svg width="16" height="17" viewBox="0 0 16 17"><path d="M1 4L3 1Q4 3 5 3.500Q6 2 9 0Q9 3 12 4Q15 5 15.500 9A7.500 7.500 0 0 1 .5 9.500Q.3 6 1 4Z" fill="#e8e8e8" /><path d="M5 8Q8 5 10 7Q12 11 8.500 12Q5.500 11.500 5 8Z" fill="#1d1d1d" /></svg>
            <span>Firefox Web Browser</span>
            <Tri />
          </AppMenu>
        </TopLeft>
        <Clock>13 mai  18:41</Clock>
        <TopRight>
          <svg width="15" height="15" viewBox="6 6 30 30">{slackParts(['#ddd', '#ddd', '#ddd', '#ddd'])}</svg>
          <WifiIcon width="16" height="13" viewBox="0 0 16 13"><path d="M0 3.500Q8-3 16 3.500L8 13Z" fill="#8a8a8a" /><path d="M2 5.500Q8 1 14 5.500L8 12.500Z" fill="#fff" /></WifiIcon>
          <TrayIcon width="16" height="14" viewBox="0 0 16 14"><path d="M0 4.500H3L7 1V13L3 9.500H0Z" fill="#eee" /><path d="M9 4.500Q10.500 7 9 9.500M11.500 2.500Q15 7 11.500 11.500" stroke="#bbb" fill="none" strokeWidth="1.300" /></TrayIcon>
          <TrayIcon width="15" height="16" viewBox="0 0 15 16"><path d="M3 3L0 9H2L1.500 13 4 7H2.500Z" fill="#888" /><rect x="6.500" y="2" width="8" height="13" rx="1" fill="none" stroke="#eee" /><path d="M8 4h5v9.500h-5zM8.500 0h4v2h-4z" fill="#eee" /></TrayIcon>
          <Tri ml={11} />
        </TopRight>
      </TopBar>
      <Body>
        <Dock>
          {dock.map(([Icon, n, active], i) => (
            <DockItem key={i} $active={active}>
              <Icon />
              <Dots>{Array.from({ length: n }, (_, k) => <i key={k} />)}</Dots>
            </DockItem>
          ))}
          <AppGrid>{Array.from({ length: 9 }, (_, k) => <i key={k} />)}</AppGrid>
        </Dock>
        <Browser>
          <TabStrip>
            <Tab>
              <Butler w={16} h={17} bare />
              <TabTitle>tqs-lab8-proj2 [Jenkins]</TabTitle>
              <Line w={10} sw={2} d="M1 1L15 15M15 1L1 15" />
            </Tab>
            <svg width="14" height="14" viewBox="0 0 14 14"><path d="M7 0V14M0 7H14" stroke="#e4e4e4" strokeWidth="1.600" /></svg>
            <WinButtons>
              <svg width="9" height="9" viewBox="0 0 9 9"><path d="M0 7.500H8.500" stroke="#eee" /></svg>
              <svg width="9" height="9" viewBox="0 0 9 9"><path d="M.5 2.500H6.500V8.500H.5Z" stroke="#eee" fill="none" /><path d="M2.500 .5H8.500V6.500" stroke="#999" fill="none" /></svg>
              <svg width="19" height="19" viewBox="0 0 19 19"><circle cx="9.500" cy="9.500" r="9.300" fill="#e95420" /><path d="M6 6L13 13M13 6L6 13" stroke="#fff" strokeWidth="1.300" /></svg>
            </WinButtons>
          </TabStrip>
          <NavBar>
            <BackButton><Line d="M15 8H1.500M7 2L1.500 8 7 14" /></BackButton>
            <NavIcons>
              <Line c="#b4b4b6" d="M1 8H14.500M9 2L14.500 8 9 14" />
              <Line d="M13.500 9.500A6 6 0 1 1 13 4.500M14 1V6H9" />
              <Line d="M1 8.500L8 1.500 15 8.500M3 8V14.500H13V8M7 14V10H9V14" />
            </NavIcons>
            <UrlBar>
              <Line w={14} sw={1.8} d="M8 1Q11 2.500 14 2.500Q14.500 12 8 15Q1.500 12 2 2.500Q5 2.500 8 1ZM8 4.500V11.500Q5 9 5 5Z" />
              <UrlSep />
              <Line d="M3 1H9.500L14 5.500V15H3ZM9 1V6H14" />
              <UrlText><b>localhost</b>:8111/job/tqs-lab8-proj2/</UrlText>
              <UrlActions>
                <svg width="16" height="4" viewBox="0 0 16 4"><g fill="#555"><circle cx="2" cy="2" r="2" /><circle cx="8" cy="2" r="2" /><circle cx="14" cy="2" r="2" /></g></svg>
                <Line d="M1.500 2H14.500V7A6.500 6.500 0 0 1 1.500 7ZM5 6L8 9 11 6" sw={1.8} />
                <Line d="M8 1L10.200 5.700 15 6.200 11.500 9.700 12.400 14.800 8 12.300 3.600 14.800 4.500 9.700 1 6.200 5.800 5.700Z" sw={1.700} />
              </UrlActions>
            </UrlBar>
            <ToolIcons>
              <Line d="M1.500 2V14.500M5 2V14.500M8.500 2V14.500M11 2L15 14.500" sw={1.700} />
              <Line d="M1 3Q1 1.500 2.500 1.500H13.500Q15 1.500 15 3V13Q15 14.500 13.500 14.500H2.500Q1 14.500 1 13ZM7.500 2V14M3.500 5H5M3.500 8H5M3.500 11H5" sw={1.700} />
              <svg width="16" height="16" viewBox="0 0 16 16"><circle cx="8" cy="8" r="7" fill="none" stroke="#515155" strokeWidth="1.200" /><circle cx="8" cy="6.300" r="3" fill="#515155" /><path d="M3 12Q5 9.500 8 9.500Q11 9.500 13 12Q11 14 8 14Q5 14 3 12Z" fill="#515155" /></svg>
              <svg width="16" height="17" viewBox="0 0 16 17"><path d="M8 0Q12 2 15.500 2Q16 13 8 17Q0 13 .5 2Q4 2 8 0Z" fill="#e11" /><rect x="5" y="7.500" width="6" height="5" fill="#fff" /><path d="M6 7.500V5.500Q8 3 10 5.500V7.500" stroke="#fff" fill="none" strokeWidth="1.200" /></svg>
              <svg width="16" height="16" viewBox="0 0 16 16"><rect width="16" height="16" fill="#454545" /><rect x="9" y="2" width="5" height="3.500" fill="#ddd" /><text x="1.500" y="13.500" fontSize="9" fontWeight="700" fill="#fff" fontFamily="Liberation Sans, sans-serif">Se</text></svg>
              <ToolSep />
              <Line d="M2 2.500H14M2 8H14M2 13.500H14" />
            </ToolIcons>
          </NavBar>
          <Viewport>
            <Page>
              <Header>
                <Butler w={30} h={38} />
                <Brand>Jenkins</Brand>
                <SearchBox>
                  <svg width="18" height="18" viewBox="0 0 18 18"><circle cx="6.500" cy="6.500" r="5.300" fill="none" stroke="#333" strokeWidth="2.200" /><path d="M10.500 10.500L17 17" stroke="#333" strokeWidth="2.400" /></svg>
                  <SearchHint>search</SearchHint>
                  <svg width="21" height="21" viewBox="0 0 21 21"><circle cx="10.500" cy="10.500" r="9.400" fill="none" stroke="#4d545d" strokeWidth="1.900" /><path d="M7.500 8.500Q7.500 5.800 10.500 5.800Q13.500 5.800 13.500 8.300Q13.500 9.800 10.500 12V13" fill="none" stroke="#4d545d" strokeWidth="1.800" /><rect x="9.500" y="14.500" width="2" height="2" fill="#4d545d" /></svg>
                </SearchBox>
                <Alert>
                  <svg width="20" height="22" viewBox="0 0 20 22"><path d="M10 0L19 4V10Q18 18 10 22Q2 18 1 10V4Z" fill="#fff" /><path d="M10 6V12.500M10 14.500V17" stroke="#000" strokeWidth="2" /></svg>
                  <span>1</span>
                </Alert>
                <HeadLink $w={139} $gap={7}>
                  <TriSvg $ml={24} width="17" height="17" viewBox="0 0 17 17"><circle cx="8.500" cy="4.300" r="4.200" fill="#fff" /><path d="M0 16.500V14Q1 10.500 8.500 10.500Q16 10.500 17 14V16.500Z" fill="#fff" /></TriSvg>
                  Mariana
                </HeadLink>
                <HeadLink $w={81} $gap={5}>
                  <svg width="22" height="19" viewBox="0 0 22 19"><path d="M1 6V1H21V18H1V13M1 9.500H13M9.500 6L13 9.500 9.500 13" stroke="#fff" strokeWidth="2" fill="none" /></svg>
                  log out
                </HeadLink>
              </Header>
              <Crumbs>Dashboard<CrumbArrow />tqs-lab8-proj2<CrumbArrow /></Crumbs>
              <Columns>
                <Side>
                  {tasks.map(([name, icon, extra], i) => (
                    <Task key={name} $on={name === 'Status'} $extra={extra} $tight={i === 0}>{icon}{name}</Task>
                  ))}
                  <HistHead><Cloud /><span>Build History</span><u>trend</u><Line w={13} c="#333" sw={2.400} d="M1.500 12L8 5 14.500 12" /></HistHead>
                  <Find><span>find</span><span>x</span></Find>
                  {builds.map(([n, d, red], i) => (
                    <Build key={n} $odd={i % 2 === 0}><Ball red={red} /><u>#{n}</u><u>{d}</u></Build>
                  ))}
                </Side>
                <Main>
                  <MainLeft>
                    <H1>Pipeline tqs-lab8-proj2</H1>
                    <IconRow $mt={81} $ls={-0.2}><Notepad s={48} /><b>Recent Changes</b></IconRow>
                    <H2 $mt={23} $mb={4} $ls={0.25}>Stage View</H2>
                    <Stage>
                      <RunCol>
                        <AvgText>Average stage times:<br />(Average <u>full</u> run time: ~26s)</AvgText>
                        {runs.map(r => (
                          <Run key={r.n} $bg={r.bg}>
                            <RunBadge $bad={r.bad}>#{r.n}</RunBadge>
                            <RunDate><div>{r.d}</div><div>{r.t}</div></RunDate>
                            <Commits $bg={r.cb}><b>{r.c}</b><br />{r.c > 1 ? 'commits' : 'commit'}</Commits>
                          </Run>
                        ))}
                      </RunCol>
                      <Grid>
                        <StageHead>{'Declarative:\nCheckout SCM'}</StageHead>
                        <StageHead $alt>{'Declarative:\nTool Install'}</StageHead>
                        <StageHead $drop>install</StageHead>
                        <Avg>165ms<Bar $px={1.5} /></Avg>
                        <Avg $alt>130ms<Bar $px={1.5} /></Avg>
                        <Avg>23s<Bar $px={114} /></Avg>
                        {cells.map((row, i) => row.map((t, j) => (
                          <CellWrap key={`${i}-${j}`} $bg={i === 2 ? '#d5ead5' : j === 1 ? '#e9fbe8' : '#e2f3e1'}>
                            <Cell $bg={cellBg[i][j]} $big={j === 2} $fail={i === 0 && j === 2}>{t}{i === 0 && j === 2 && <small>failed</small>}</Cell>
                          </CellWrap>
                        )))}
                      </Grid>
                    </Stage>
                    <IconRow $mt={36} $ls={0.05}><Clip s={48} /><b>Latest Test Result</b><span>(1 failure / +1)</span></IconRow>
                    <H2 $mt={8} $mb={0} $ls={-0.25}>Permalinks</H2>
                    <Links>{links.map(l => <li key={l}><a>{l}</a></li>)}</Links>
                  </MainLeft>
                  <Right>
                    <AddDesc><SmallNote />add description</AddDesc>
                    <Disable>Disable Project</Disable>
                    <ChartBox><Chart /></ChartBox>
                  </Right>
                </Main>
              </Columns>
            </Page>
            <Scroll />
          </Viewport>
        </Browser>
      </Body>
    </Screen>
  );
}
